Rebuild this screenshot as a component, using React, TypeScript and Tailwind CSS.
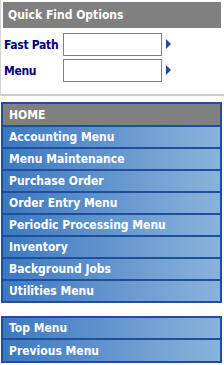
const menuItems = [
	"Accounting Menu",
	"Menu Maintenance",
	"Purchase Order",
	"Order Entry Menu",
	"Periodic Processing Menu",
	"Inventory",
	"Background Jobs",
	"Utilities Menu",
]

export default function App() {
	return (
		<div className="h-[365px] w-[224px] overflow-hidden bg-white font-['DejaVu_Sans_Condensed','DejaVu_Sans',sans-serif] text-[12px] font-bold">
			<QuickFind />
			<div className="h-[2px] bg-[#cccccc]" />
			<MenuBox className="mt-[6px]">
				<div className="flex h-[21px] items-center bg-[#808080] pl-[6px] text-white">HOME</div>
				{menuItems.map((item) => (
					<MenuRow key={item} label={item} />
				))}
			</MenuBox>
			<MenuBox className="mt-[13px]">
				<MenuRow label="Top Menu" />
				<MenuRow label="Previous Menu" className="h-[21px]" />
			</MenuBox>
		</div>
	)
}

function QuickFind() {
	return (
		<div className="h-[94px] border-l border-[#d4d4d4] pt-[2px] pr-[3px] pl-[2px]">
			<div className="flex h-[26px] items-center bg-[#808080] pl-[5px] text-white">Quick Find Options</div>
			<div className="mt-[5px] flex flex-col gap-[3px]">
				<FindRow label="Fast Path" />
				<FindRow label="Menu" />
			</div>
		</div>
	)
}

function FindRow({ label }: { label: string }) {
	return (
		<div className="flex h-[23px] items-center">
			<span className="w-[60px] pl-[1px] tracking-[-0.3px] text-[#000080]">{label}</span>
			<input type="text" className="h-[23px] w-[99px] border border-[#808080] bg-white outline-none" />
			<svg width="5" height="10" viewBox="0 0 5 10" className="-mt-[2px] ml-[4px]">
				<path d="M0 0 L5 5 L0 10 Z" fill="#1e4e9c" />
			</svg>
		</div>
	)
}

function MenuBox({ className, children }: { className?: string; children: React.ReactNode }) {
	return (
		<div className={`ml-[1px] flex w-[221px] flex-col gap-[2px] bg-[#1e4e9c] p-[2px] ${className ?? ""}`}>
			{children}
		</div>
	)
}

function MenuRow({ label, className }: { label: string; className?: string }) {
	return (
		<div
			className={`flex items-center bg-linear-to-r from-[#3c78c0] to-[#8ab3db] pl-[6px] text-white ${className ?? "h-[20px]"}`}
		>
			{label}
		</div>
	)
}
